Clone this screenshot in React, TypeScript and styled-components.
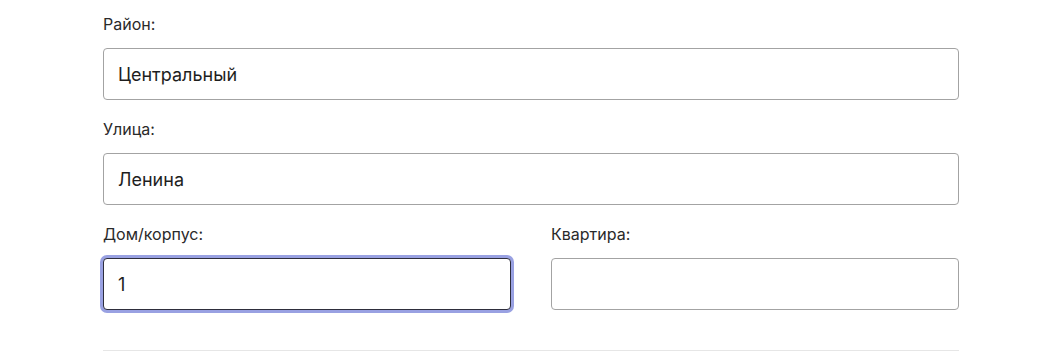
import React from "react";
import styled, { createGlobalStyle } from "styled-components";

const Global = createGlobalStyle`
  html, body { margin: 0; padding: 0; background: #ffffff; }
  body { font-family: Inter, "Noto Sans", sans-serif; color: #222222; }
  * { box-sizing: border-box; }
`;

const Form = styled.form`
  width: 856px;
  margin-left: 103px;
  padding-top: 12px;
  display: flex;
  flex-direction: column;
  gap: 17px;
`;

const Row = styled.div`
  display: grid;
  grid-template-columns: 1fr 1fr;
  column-gap: 40px;
`;

const Field = styled.div`
  display: flex;
  flex-direction: column;
`;

const Label = styled.label`
  font-size: 16px;
  line-height: 20px;
  color: #2a2a2a;
  padding-top: 2px;
  margin-bottom: 14px;
`;

const Input = styled.input<{ $focused?: boolean }>`
  height: 52px;
  width: 100%;
  border: 1px solid ${(p) => (p.$focused ? "#2e2e3c" : "#a3a3a3")};
  border-radius: 4px;
  padding: 0 14px;
  font-family: Inter, "Noto Sans", sans-serif;
  font-size: 18px;
  color: #1e1e1e;
  background: #ffffff;
  outline: none;
  box-shadow: ${(p) => (p.$focused ? "0 0 0 3px #99a1e2" : "none")};
`;

const Divider = styled.hr`
  border: none;
  border-top: 1px solid #e6e6e6;
  margin: 23px 0 0 0;
`;

export default function App() {
  return (
    <>
      <Global />
      <Form onSubmit={(e) => e.preventDefault()}>
        <Field>
          <Label>Район:</Label>
          <Input defaultValue="Центральный" />
        </Field>
        <Field>
          <Label>Улица:</Label>
          <Input defaultValue="Ленина" />
        </Field>
        <Row>
          <Field>
            <Label>Дом/корпус:</Label>
            <Input defaultValue="1" $focused />
          </Field>
          <Field>
            <Label>Квартира:</Label>
            <Input defaultValue="" />
          </Field>
        </Row>
        <Divider />
      </Form>
    </>
  );
}
